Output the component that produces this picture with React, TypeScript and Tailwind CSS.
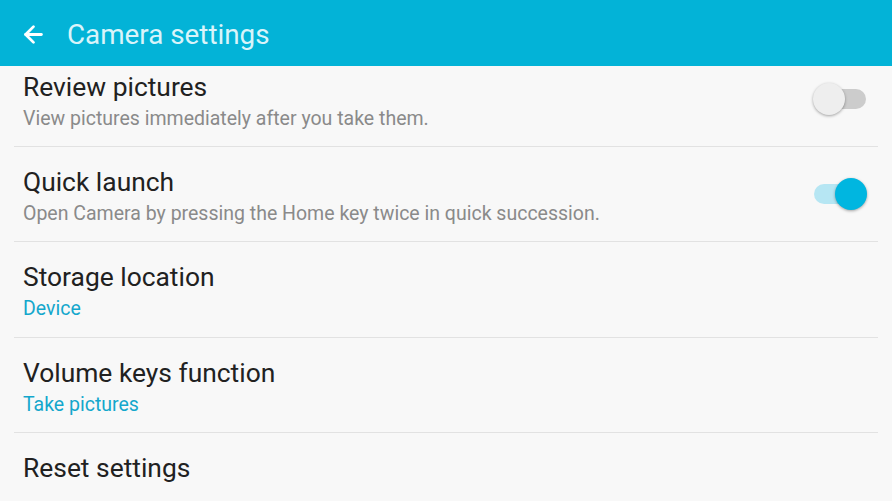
import { ArrowLeft } from "lucide-react";

type Row = {
  title: string;
  sub?: string;
  subBlue?: boolean;
  toggle?: "on" | "off";
  h: string;
};

const ROWS: Row[] = [
  { title: "Review pictures", sub: "View pictures immediately after you take them.", toggle: "off", h: "h-[95px]" },
  { title: "Quick launch", sub: "Open Camera by pressing the Home key twice in quick succession.", toggle: "on", h: "h-[95px]" },
  { title: "Storage location", sub: "Device", subBlue: true, h: "h-[96px]" },
  { title: "Volume keys function", sub: "Take pictures", subBlue: true, h: "h-[95px]" },
  { title: "Reset settings", h: "h-[95px]" },
];

function Toggle({ on }: { on: boolean }) {
  return (
    <div className="relative w-[54px] h-[32px] flex items-center shrink-0">
      <div className={`w-[52px] h-[20px] ml-[1px] rounded-full ${on ? "bg-[#b6e6f3]" : "bg-[#cccccc]"}`} />
      <div
        className={`absolute top-0 w-[32px] h-[32px] rounded-full shadow-[0_1px_3px_rgba(0,0,0,0.35)] ${
          on ? "right-0 bg-[#00b6e0]" : "left-0 bg-[#eeeeee]"
        }`}
      />
    </div>
  );
}

export default function App() {
  return (
    <div className="w-[892px] h-[501px] overflow-hidden bg-[#f8f8f8] flex flex-col" style={{ fontFamily: "Roboto, sans-serif" }}>
      <header className="h-[66px] shrink-0 bg-[#03b3d7] flex items-center pl-[20px] pt-[3px] z-10">
        <ArrowLeft size={27} strokeWidth={2.5} className="text-white" />
        <h1 className="ml-[20px] text-[27.8px] text-[#d9f4fa] leading-none">Camera settings</h1>
      </header>

      <main className="flex-1 overflow-hidden">
        <div className="mx-[14px] -mt-[14px]">
          {ROWS.map(({ title, sub, subBlue, toggle, h }) => (
            <div
              key={title}
              className={`${h} border-b border-[#e2e2e2] pl-[9px] pr-[11px] flex items-center`}
            >
              <div className="flex-1 self-start pt-[20px]">
                <p className="text-[26.4px] leading-[30px] text-[#212121]">{title}</p>
                {sub && (
                  <p className={`mt-[6px] text-[19.5px] leading-[22px] ${subBlue ? "text-[#14a7cc]" : "text-[#8a8a8a]"}`}>
                    {sub}
                  </p>
                )}
              </div>
              {toggle && <Toggle on={toggle === "on"} />}
            </div>
          ))}
        </div>
      </main>
    </div>
  );
}
